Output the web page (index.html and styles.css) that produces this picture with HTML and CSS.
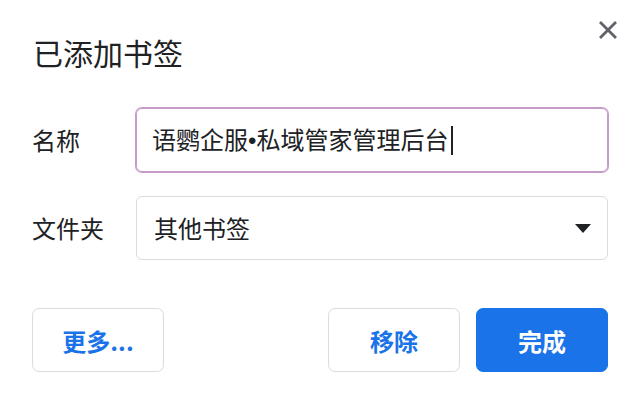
FILE: index.html
```html
<!DOCTYPE html>
<html lang="zh-CN">
<head>
<meta charset="utf-8">
<title>已添加书签</title>
<link rel="stylesheet" href="styles.css">
</head>
<body>
<div class="dialog">
  <div class="header">
    <h1 class="title">已添加书签</h1>
    <button class="close" aria-label="关闭">
      <svg width="24" height="24" viewBox="0 0 24 24"><path d="M4 4L20 20M20 4L4 20" stroke="#5f6368" stroke-width="2.8" fill="none"/></svg>
    </button>
  </div>
  <div class="form">
    <div class="row">
      <label class="label">名称</label>
      <div class="field field-focus"><span class="value">语鹦企服<span class="dot">•</span>私域管家管理后台</span><span class="caret"></span></div>
    </div>
    <div class="row">
      <label class="label">文件夹</label>
      <div class="field field-select"><span class="value">其他书签</span><span class="arrow"></span></div>
    </div>
  </div>
  <div class="actions">
    <button class="btn">更多...</button>
    <div class="spacer"></div>
    <button class="btn">移除</button>
    <button class="btn btn-primary">完成</button>
  </div>
</div>
</body>
</html>
```
FILE: styles.css
```css
* { box-sizing: border-box; }
html, body { margin: 0; padding: 0; background: #ffffff; }
body {
  font-family: "Noto Sans CJK SC", "Noto Sans", sans-serif;
  color: #202124;
}
.dialog {
  width: 640px;
  height: 404px;
  padding: 0 32px;
  display: flex;
  flex-direction: column;
}
.header {
  display: flex;
  align-items: flex-start;
  justify-content: space-between;
}
.title {
  margin: 32px 0 0 1px;
  font-size: 30px;
  line-height: 40px;
  font-weight: 400;
  color: #202124;
}
.close {
  margin: 18px -12px 0 0;
  width: 24px;
  height: 24px;
  padding: 0;
  border: 0;
  background: none;
  display: flex;
}
.form {
  margin-top: 36px;
  display: flex;
  flex-direction: column;
  gap: 24px;
}
.row {
  display: flex;
  align-items: center;
}
.label {
  width: 104px;
  font-size: 24px;
  line-height: 32px;
}
.field {
  flex: 1;
  height: 64px;
  border: 1px solid #dadce0;
  border-radius: 6px;
  display: flex;
  align-items: center;
  font-size: 24px;
  padding: 0 16px;
}
.field-focus {
  border-color: #c49cc7;
  box-shadow: 0 0 0 1px #c49cc7;
  padding-left: 15px;
}
.field-select {
  justify-content: space-between;
  padding-left: 17px;
}
.value { line-height: 32px; }
.dot { font-family: "Liberation Sans", sans-serif; }
.caret {
  display: inline-block;
  width: 2px;
  height: 29px;
  background: #202124;
  margin-left: 3px;
}
.arrow {
  width: 0;
  height: 0;
  border-left: 8px solid transparent;
  border-right: 8px solid transparent;
  border-top: 9px solid #202124;
}
.actions {
  margin-top: 48px;
  display: flex;
  gap: 16px;
}
.spacer { flex: 1; }
.btn {
  width: 132px;
  height: 64px;
  border: 1px solid #dadce0;
  border-radius: 7px;
  background: #ffffff;
  color: #1a73e8;
  font-family: "Noto Sans CJK SC", "Noto Sans", sans-serif;
  font-size: 24px;
  font-weight: 700;
  padding: 0;
}
.btn-primary {
  background: #1a73e8;
  border-color: #1a73e8;
  color: #ffffff;
}
```
